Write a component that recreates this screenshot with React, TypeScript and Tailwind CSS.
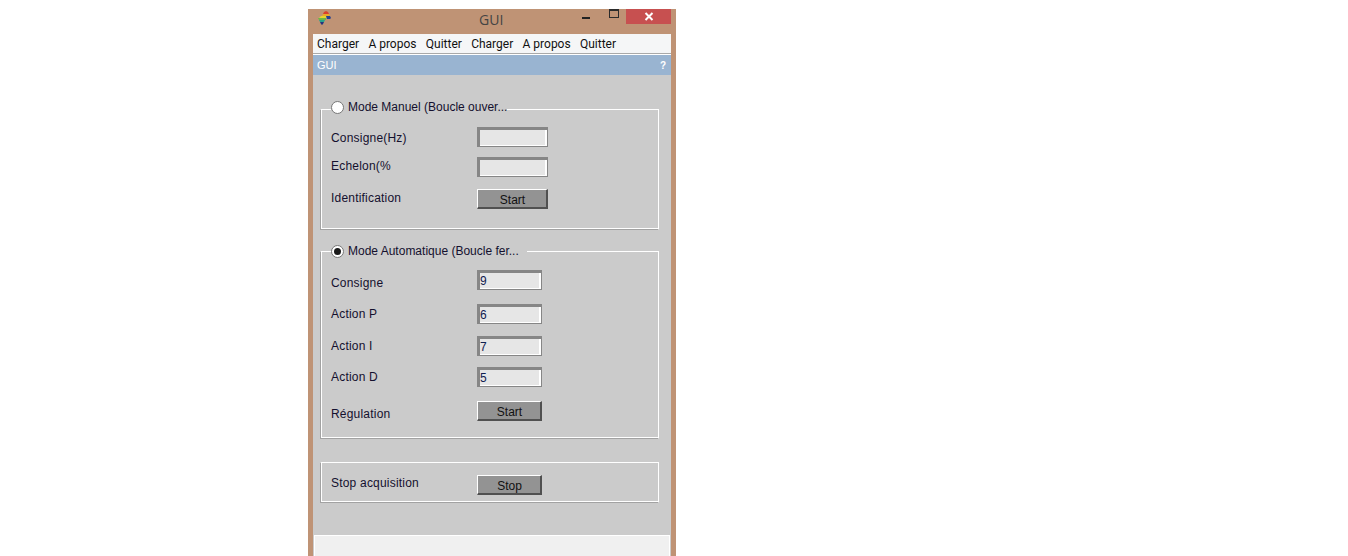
const ui = "font-['Liberation_Sans',Arial,sans-serif]"
const win = "font-['Open_Sans','Noto_Sans',sans-serif]"

function AppIcon() {
  return (
    <svg width="16" height="17" viewBox="0 0 16 17" className="shrink-0">
      <path d="M8 2l2-1 2 1 1 2H7z" fill="#d8402c" />
      <path d="M7 4h6l1 2H6z" fill="#e9a92a" />
      <path d="M5 6h5l1 2H3z" fill="#e6d52f" />
      <path d="M10 6h4l1 2-1 1h-3z" fill="#24408f" />
      <path d="M2 8h8v2H3z" fill="#6cb648" />
      <path d="M3 10h6l-1 2H4z" fill="#2aa38c" />
      <path d="M4 12h4l-1 2-1 1-1-1z" fill="#23357f" />
    </svg>
  )
}

function TitleBar() {
  return (
    <div className="relative flex h-[25px] items-start justify-between bg-[#bf9375] pl-2 pr-[5px]">
      <div className="pt-[1px]">
        <AppIcon />
      </div>
      <span className={`${win} absolute left-[171px] top-[1px] text-[14px] leading-5 text-[#444]`}>GUI</span>
      <div className="flex items-start">
        <div className="mr-[19px] mt-2 h-[2px] w-[8px] bg-[#222]" />
        <div className="mr-[7px] h-[9px] w-[10px] border border-t-2 border-[#2b2b2b]" />
        <div className="flex h-[15px] w-[45px] items-center justify-center bg-[#c75050]">
          <svg width="10" height="9" viewBox="0 0 10 9">
            <path d="M1.500 1l7 7M8.500 1l-7 7" stroke="#fff" strokeWidth="2" fill="none" />
          </svg>
        </div>
      </div>
    </div>
  )
}

function MenuBar() {
  const items = ["Charger", "A propos", "Quitter", "Charger", "A propos", "Quitter"]
  return (
    <div className="flex h-5 shrink-0 gap-[9.300px] border-b border-[#a9a9a9] bg-[#f5f6f7] pl-1 font-['Roboto',sans-serif] text-[12px] leading-5 text-[#111]">
      {items.map((item, i) => (
        <span key={i}>{item}</span>
      ))}
    </div>
  )
}

function Radio({ checked }: { checked?: boolean }) {
  return (
    <span className="flex h-[13px] w-[13px] items-center justify-center rounded-full border border-[#777] bg-white">
      {checked && <span className="h-[7px] w-[7px] rounded-full bg-[#1a1a1a]" />}
    </span>
  )
}

function Legend({ checked, text, className }: { checked?: boolean; text: string; className: string }) {
  return (
    <div className={`${ui} absolute left-[10px] flex h-[16px] items-center gap-[4px] bg-[#cbcbcb] text-[12px] text-[#14102e] ${className}`}>
      <Radio checked={checked} />
      <span>{text}</span>
    </div>
  )
}

function Input({ value, wide }: { value?: string; wide?: boolean }) {
  return (
    <div
      className={`${wide ? "w-[71px]" : "w-[65px]"} h-5 border border-t-[3px] border-l-[3px] border-[#868686] bg-[#e6e6e6] text-[12px] leading-[17px] text-[#102050] shadow-[inset_-2px_-1px_0_#fff]`}
    >
      {value}
    </div>
  )
}

function Button({ label, wide }: { label: string; wide?: boolean }) {
  return (
    <button
      className={`${wide ? "w-[71px]" : "w-[65px]"} h-5 border border-r-2 border-b-2 border-t-white border-l-white border-r-[#505050] border-b-[#505050] bg-[#939393] pt-[2px] pl-[1px] text-center text-[12px] leading-[17px] text-[#111]`}
    >
      {label}
    </button>
  )
}

function Row({ label, className, labelClass, children }: { label: string; className: string; labelClass: string; children: React.ReactNode }) {
  return (
    <div className={`flex items-start ${className}`}>
      <span className={`w-[146px] text-[12px] leading-4 tracking-[0.2px] text-[#14102e] ${labelClass}`}>{label}</span>
      {children}
    </div>
  )
}

const group =
  "relative ml-[7px] w-[339px] border border-t-white border-r-white border-l-[#a2a2a2] border-b-[#a2a2a2] pl-[10px] shadow-[inset_1px_-1px_0_#fff]"

export default function App() {
  return (
    <div className="h-[556px] w-full overflow-hidden bg-white pl-[308px] pt-[9px]">
      <div className="h-[547px] w-[368px] bg-[#bf9375]">
        <TitleBar />
        <div className="mx-[5px] flex h-[522px] flex-col bg-white">
          <MenuBar />
          <div className={`${ui} mt-[1px] flex h-5 shrink-0 items-center justify-between bg-[#99b4d1] pl-1 pr-[5px] text-[11px] text-white`}>
            <span>GUI</span>
            <span className="text-[10px] font-bold">?</span>
          </div>
          <div className={`${ui} min-h-0 flex-1 overflow-hidden bg-[#cbcbcb] pt-[34px]`}>
            <div className={`${group} h-[121px] pt-[17px]`}>
              <Legend text="Mode Manuel (Boucle ouver..." className="-top-[11px]" />
              <Row label="Consigne(Hz)" className="" labelClass="mt-[3px]">
                <Input wide />
              </Row>
              <Row label="Echelon(%" className="mt-[10px]" labelClass="mt-[1px]">
                <Input wide />
              </Row>
              <Row label="Identification" className="mt-3" labelClass="mt-[1px]">
                <Button label="Start" wide />
              </Row>
            </div>
            <div className={`${group} mt-[21px] h-[188px] pt-[18px]`}>
              <Legend checked text="Mode Automatique (Boucle fer..." className="-top-[9px] pr-2" />
              <Row label="Consigne" className="" labelClass="mt-[5px]">
                <Input value="9" />
              </Row>
              <Row label="Action P" className="mt-[13px]" labelClass="mt-[2px]">
                <Input value="6" />
              </Row>
              <Row label="Action I" className="mt-3" labelClass="mt-[2px]">
                <Input value="7" />
              </Row>
              <Row label="Action D" className="mt-[11px]" labelClass="mt-[2px]">
                <Input value="5" />
              </Row>
              <Row label="Régulation" className="mt-[14px]" labelClass="mt-[5px]">
                <Button label="Start" />
              </Row>
            </div>
            <div className={`${group} mt-[23px] h-[41px] pt-3`}>
              <Row label="Stop acquisition" className="" labelClass="mt-0">
                <Button label="Stop" />
              </Row>
            </div>
            <div className="mx-[1px] mt-8 h-[30px] border border-b-0 border-white bg-[#f0f0f0]" />
          </div>
        </div>
      </div>
    </div>
  )
}
